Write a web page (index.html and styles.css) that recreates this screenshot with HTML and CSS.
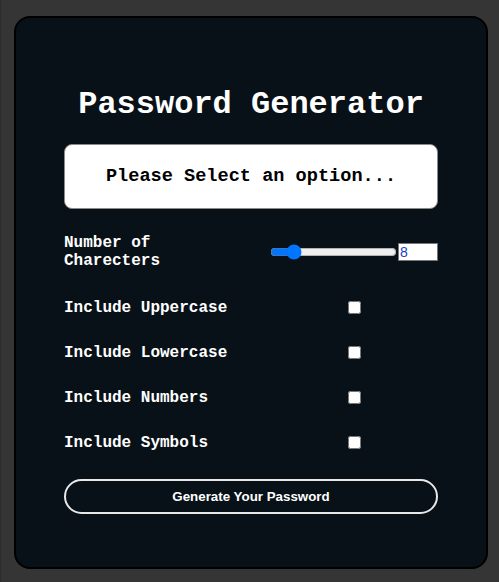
FILE: index.html
```html
<!DOCTYPE html>
<html lang="en">
<head>
<meta charset="utf-8">
<title>Password Generator</title>
<link rel="stylesheet" href="styles.css">
</head>
<body>
<div class="card">
  <h1 class="title">Password Generator</h1>
  <div class="display">Please Select an option...</div>
  <div class="row row-length">
    <label class="label label-length" for="len">Number of Charecters</label>
    <div class="length-controls">
      <input class="slider" type="range" id="len" min="1" max="50" value="8">
      <input class="number" type="number" min="1" max="50" value="8">
    </div>
  </div>
  <div class="row row-check">
    <label class="label label-check" for="up">Include Uppercase</label>
    <input class="check" type="checkbox" id="up">
  </div>
  <div class="row row-check">
    <label class="label label-check" for="low">Include Lowercase</label>
    <input class="check" type="checkbox" id="low">
  </div>
  <div class="row row-check">
    <label class="label label-check" for="num">Include Numbers</label>
    <input class="check" type="checkbox" id="num">
  </div>
  <div class="row row-check">
    <label class="label label-check" for="sym">Include Symbols</label>
    <input class="check" type="checkbox" id="sym">
  </div>
  <button class="generate" type="button">Generate Your Password</button>
</div>
</body>
</html>
```
FILE: styles.css
```css
html, body {
  margin: 0;
  padding: 0;
}
body {
  background: #353535;
  border-left: 1px solid #2c2c2c;
  min-height: 582px;
  box-sizing: border-box;
  padding: 16px 0 0 13px;
}
.card {
  width: 374px;
  background: #081117;
  border: 2px solid #000;
  border-radius: 16px;
  padding: 69px 48px 53px 48px;
  display: flex;
  flex-direction: column;
  font-family: "Courier New", "Liberation Mono", monospace;
  color: #fff;
}
.title {
  margin: 0;
  font-size: 32px;
  line-height: 36px;
  font-weight: bold;
  text-align: center;
  color: #fff;
}
.display {
  margin-top: 21px;
  height: 63px;
  background: #fff;
  border: 1px solid #8a8a8a;
  border-radius: 8px;
  display: flex;
  align-items: center;
  justify-content: center;
  color: #000;
  font-weight: bold;
  font-size: 18.6px;
}
.row {
  display: flex;
  align-items: center;
}
.label {
  font-weight: bold;
  font-size: 16px;
  line-height: 18px;
  color: #fff;
}
.row-length {
  margin-top: 25px;
  justify-content: space-between;
}
.label-length {
  width: 140px;
}
.length-controls {
  display: flex;
  align-items: center;
}
.slider {
  width: 127px;
  margin: 0 1px 0 0;
  accent-color: #0075ff;
}
.number {
  width: 40px;
  height: 18px;
  box-sizing: border-box;
  border: 1px solid #767676;
  padding: 0 1px;
  font-family: "Liberation Sans", Arial, sans-serif;
  font-size: 14px;
  line-height: 16px;
  color: #1f3cc8;
  background: #fff;
}
.row-check {
  margin-top: 28px;
}
.row-check + .row-check {
  margin-top: 26px;
}
.label-check {
  width: 280px;
}
.check {
  width: 13px;
  height: 13px;
  margin: 3px 3px 3px 4px;
}
.generate {
  margin-top: 27px;
  height: 35px;
  background: transparent;
  border: 2px solid #e8e8e8;
  border-radius: 17.5px;
  color: #fff;
  font-family: "Liberation Sans", Arial, sans-serif;
  font-weight: bold;
  font-size: 13.33px;
  cursor: pointer;
}
```
